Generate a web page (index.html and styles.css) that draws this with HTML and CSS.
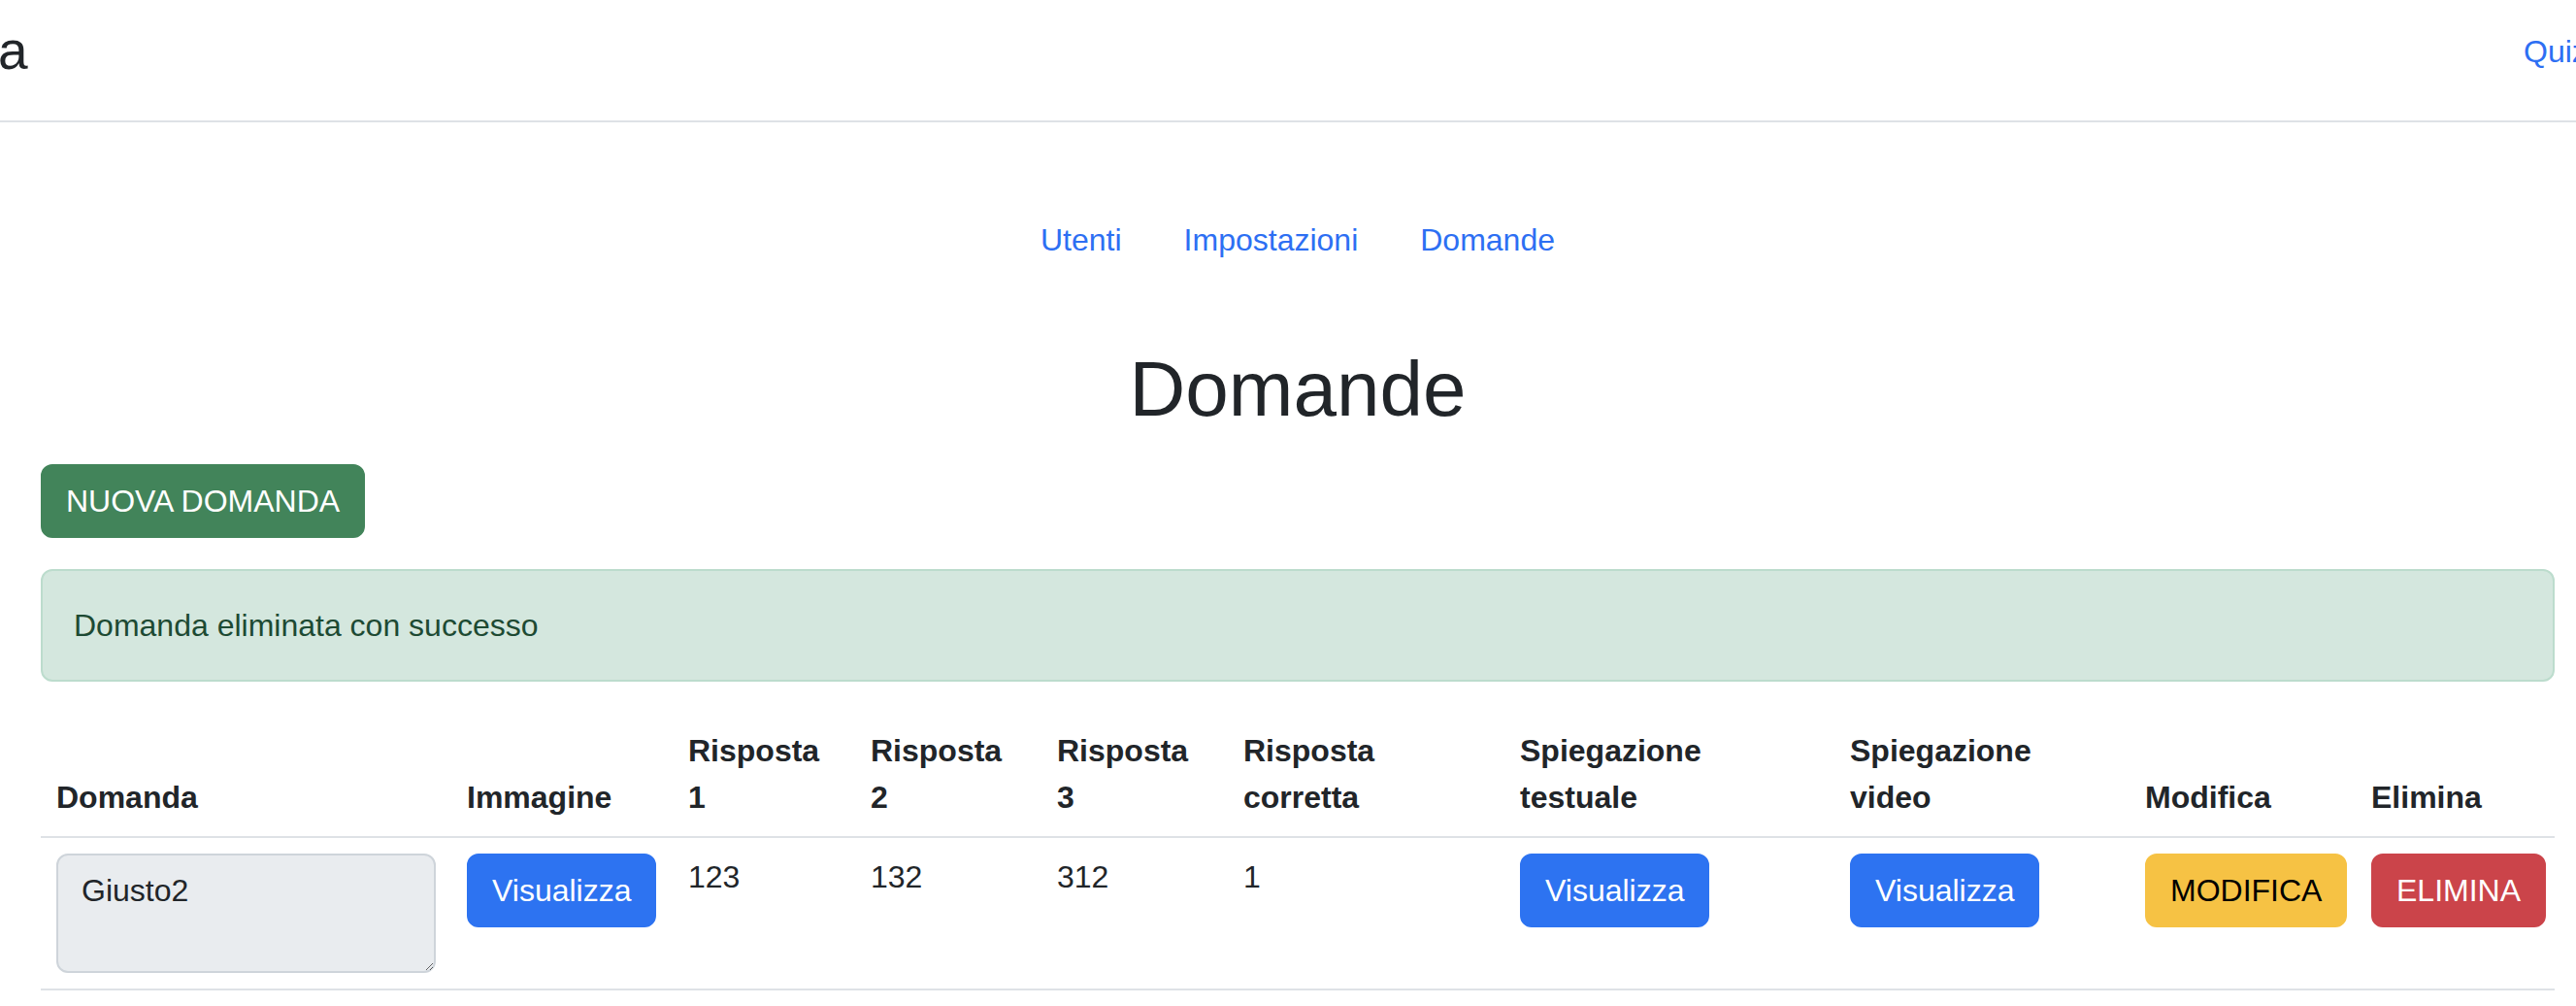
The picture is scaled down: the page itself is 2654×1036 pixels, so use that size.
FILE: index.html
```html
<!DOCTYPE html>
<html lang="it">
<head>
<meta charset="utf-8">
<title>Domande</title>
<link rel="stylesheet" href="styles.css">
</head>
<body>
<header class="navbar">
  <span class="brand">a</span>
  <a class="nav-right" href="#">Quiz</a>
</header>
<main class="container">
  <nav class="subnav">
    <a class="subnav-link" href="#">Utenti</a>
    <a class="subnav-link" href="#">Impostazioni</a>
    <a class="subnav-link" href="#">Domande</a>
  </nav>
  <h1 class="title">Domande</h1>
  <button class="btn btn-success btn-new" type="button">NUOVA DOMANDA</button>
  <div class="alert">Domanda eliminata con successo</div>
  <table class="table">
    <colgroup>
      <col class="c1"><col class="c2"><col class="c3"><col class="c4"><col class="c5">
      <col class="c6"><col class="c7"><col class="c8"><col class="c9"><col class="c10">
    </colgroup>
    <thead>
      <tr>
        <th>Domanda</th>
        <th>Immagine</th>
        <th>Risposta 1</th>
        <th>Risposta 2</th>
        <th>Risposta 3</th>
        <th>Risposta corretta</th>
        <th>Spiegazione testuale</th>
        <th>Spiegazione video</th>
        <th>Modifica</th>
        <th>Elimina</th>
      </tr>
    </thead>
    <tbody>
      <tr>
        <td><textarea class="form-control" rows="2" readonly>Giusto2</textarea></td>
        <td><button class="btn btn-primary" type="button">Visualizza</button></td>
        <td>123</td>
        <td>132</td>
        <td>312</td>
        <td>1</td>
        <td><button class="btn btn-primary" type="button">Visualizza</button></td>
        <td><button class="btn btn-primary" type="button">Visualizza</button></td>
        <td><button class="btn btn-warning" type="button">MODIFICA</button></td>
        <td><button class="btn btn-danger" type="button">ELIMINA</button></td>
      </tr>
    </tbody>
  </table>
</main>
</body>
</html>
```

FILE: styles.css
```css
html, body {
  margin: 0;
  padding: 0;
  overflow: hidden;
  background: #ffffff;
}

body {
  font-family: "Liberation Sans", Arial, sans-serif;
  font-size: 32px;
  line-height: 48px;
  color: #212529;
}

/* top navbar */
.navbar {
  display: flex;
  align-items: flex-start;
  height: 124px;
  border-bottom: 2px solid #dee2e6;
  overflow: hidden;
}

.brand {
  font-size: 55px;
  line-height: 54px;
  margin-top: 25px;
  margin-left: -2px;
  color: #212529;
}

.nav-right {
  margin-left: auto;
  margin-top: 29px;
  width: 54px;
  flex-shrink: 0;
  white-space: nowrap;
  color: #2d6ff3;
  text-decoration: none;
}

/* main container */
.container {
  padding: 0 22px 0 42px;
}

.subnav {
  display: flex;
  justify-content: center;
  margin-top: 81px;
}

.subnav-link {
  padding: 16px 32px;
  color: #2d6ff3;
  text-decoration: none;
}

.title {
  margin: 66px 0 29px;
  font-size: 80px;
  line-height: 96px;
  font-weight: 400;
  text-align: center;
  color: #212529;
}

/* buttons */
.btn {
  display: inline-block;
  font-family: inherit;
  font-size: 32px;
  line-height: 48px;
  padding: 12px 24px;
  border: 2px solid transparent;
  border-radius: 12px;
  white-space: nowrap;
  cursor: pointer;
}

.btn-new {
  display: block;
  margin-bottom: 32px;
}

.btn-success {
  background: #42845a;
  border-color: #42845a;
  color: #ffffff;
}

.btn-primary {
  background: #2d73f1;
  border-color: #2d73f1;
  color: #ffffff;
}

.btn-warning {
  background: #f6c244;
  border-color: #f6c244;
  color: #000000;
}

.btn-danger {
  background: #cb444a;
  border-color: #cb444a;
  color: #ffffff;
}

/* alert */
.alert {
  padding: 32px;
  border: 2px solid #bcdccd;
  border-radius: 12px;
  background: #d4e7de;
  color: #1d4a33;
  margin-bottom: 31px;
}

/* table */
.table {
  width: 100%;
  border-collapse: collapse;
  table-layout: fixed;
}

.c1 { width: 423px; }
.c2 { width: 228px; }
.c3 { width: 188px; }
.c4 { width: 192px; }
.c5 { width: 192px; }
.c6 { width: 285px; }
.c7 { width: 340px; }
.c8 { width: 304px; }
.c9 { width: 233px; }
.c10 { width: 205px; }

.table th {
  text-align: left;
  vertical-align: bottom;
  padding: 16px;
  font-weight: 700;
  border-bottom: 2px solid #dee2e6;
}

.table td {
  vertical-align: top;
  padding: 16px;
  border-bottom: 2px solid #dee2e6;
}

.form-control {
  display: block;
  box-sizing: border-box;
  width: 100%;
  height: 123px;
  padding: 12px 24px;
  font-family: inherit;
  font-size: 32px;
  line-height: 48px;
  color: #212529;
  background: #e9ecef;
  border: 2px solid #ced4da;
  border-radius: 12px;
  resize: vertical;
  margin: 0;
}
```
